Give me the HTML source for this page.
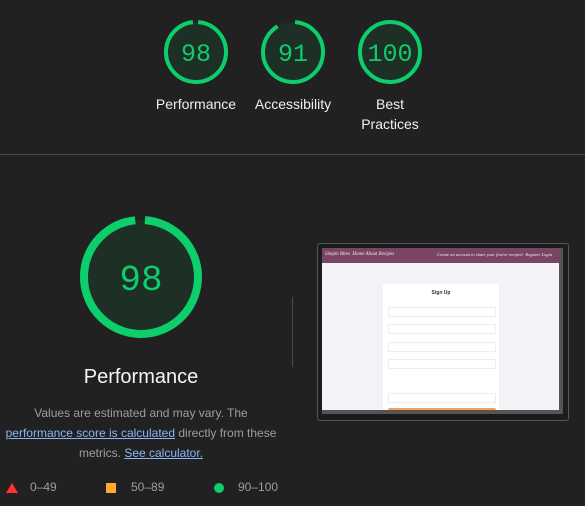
<!DOCTYPE html>
<html><head><meta charset="utf-8"><style>
body{margin:0;width:585px;height:506px;background:#212121;font-family:"Liberation Sans",Arial,sans-serif;position:relative;overflow:hidden;color:#f5f5f5}
.a{position:absolute}
.lbl{position:absolute;width:100px;text-align:center;font-size:14px;line-height:20px;color:#f0f0f0}
.num{font-family:"Liberation Mono",monospace;fill:#0cce6b}
a{color:#8ab4f8;text-decoration:underline}
</style></head><body>
<svg class="a" style="left:0;top:0" width="585" height="160">
 <g fill="#1e2f26">
  <circle cx="196" cy="52" r="30"/><circle cx="293" cy="52" r="30"/><circle cx="390" cy="52" r="30"/>
 </g>
 <g fill="none" stroke="#0cce6b" stroke-width="4">
  <circle cx="196" cy="52" r="30" stroke-dasharray="183 200" transform="rotate(-86 196 52)"/>
  <circle cx="293" cy="52" r="30" stroke-dasharray="170 200" transform="rotate(-86 293 52)"/>
  <circle cx="390" cy="52" r="30"/>
 </g>
 <g class="num" font-size="25" text-anchor="middle">
  <text x="196" y="61">98</text><text x="293" y="61">91</text><text x="390" y="61">100</text>
 </g>
</svg>
<div class="lbl" style="left:146px;top:94px">Performance</div>
<div class="lbl" style="left:243px;top:94px">Accessibility</div>
<div class="lbl" style="left:340px;top:94px">Best<br>Practices</div>
<div class="a" style="left:0;top:154px;width:585px;height:1px;background:#4a4a4a"></div>
<svg class="a" style="left:70px;top:206px" width="142" height="142">
 <circle cx="71" cy="71" r="57" fill="#1e2f26"/>
 <circle cx="71" cy="71" r="57" fill="none" stroke="#0cce6b" stroke-width="8" stroke-dasharray="348 400" transform="rotate(-86 71 71)"/>
 <text x="71" y="84" class="num" font-size="36" text-anchor="middle">98</text>
</svg>
<div class="a" style="left:41px;top:366px;width:200px;text-align:center;font-size:20px;color:#f5f5f5">Performance</div>
<div class="a" style="left:0;top:403px;width:282px;text-align:center;font-size:12px;line-height:20px;color:#9e9e9e">Values are estimated and may vary. The <a>performance score is calculated</a> directly from these metrics. <a>See calculator.</a></div>
<div class="a" style="left:292px;top:297px;width:1px;height:70px;background:#4a4a4a"></div>
<svg class="a" style="left:5px;top:482px" width="14" height="12"><polygon points="7,1 13,11 1,11" fill="#ff3333"/></svg>
<div class="a" style="left:30px;top:480px;font-size:12px;color:#9e9e9e">0–49</div>
<div class="a" style="left:106px;top:483px;width:10px;height:10px;background:#ffaa33"></div>
<div class="a" style="left:131px;top:480px;font-size:12px;color:#9e9e9e">50–89</div>
<div class="a" style="left:214px;top:483px;width:10px;height:10px;border-radius:50%;background:#0cce6b"></div>
<div class="a" style="left:238px;top:480px;font-size:12px;color:#9e9e9e">90–100</div>
<div class="a" style="left:317px;top:243px;width:250px;height:176px;border:1px solid #555;border-radius:3px;background:#1c1c1c"></div>
<div class="a" style="left:322px;top:248px;width:241px;height:166px;background:#f3f2f7;overflow:hidden">
 <div class="a" style="left:0;top:0;width:241px;height:15px;background:#7a4565"></div>
 <div class="a" style="left:3px;top:4px;font-size:5px;color:#eee;font-style:italic;font-family:'Liberation Serif',serif">Simple Bites &nbsp;Home About Recipes</div>
 <div class="a" style="left:115px;top:4px;font-size:4.5px;color:#eee;font-style:italic;font-family:'Liberation Serif',serif">Create an account to share your festive recipes! &nbsp;Register Login</div>
 <div class="a" style="left:61px;top:36px;width:116px;height:130px;background:#fff"></div>
 <div class="a" style="left:61px;top:42px;width:116px;text-align:center;font-size:5px;color:#333;font-weight:bold">Sign Up</div>
 <div class="a" style="left:66px;top:59px;width:106px;height:8px;background:#fff;border:1px solid #eee"></div>
 <div class="a" style="left:66px;top:76px;width:106px;height:8px;background:#fff;border:1px solid #eee"></div>
 <div class="a" style="left:66px;top:94px;width:106px;height:8px;background:#fff;border:1px solid #eee"></div>
 <div class="a" style="left:66px;top:111px;width:106px;height:8px;background:#fff;border:1px solid #eee"></div>
 <div class="a" style="left:66px;top:145px;width:106px;height:8px;background:#fff;border:1px solid #eee"></div>
 <div class="a" style="left:66px;top:160px;width:108px;height:8px;background:#f0a060;border-radius:2px"></div>
 <div class="a" style="left:237px;top:0;width:4px;height:166px;background:#555"></div>
 <div class="a" style="left:0;top:162px;width:241px;height:4px;background:#555"></div>
</div>
</body></html>
